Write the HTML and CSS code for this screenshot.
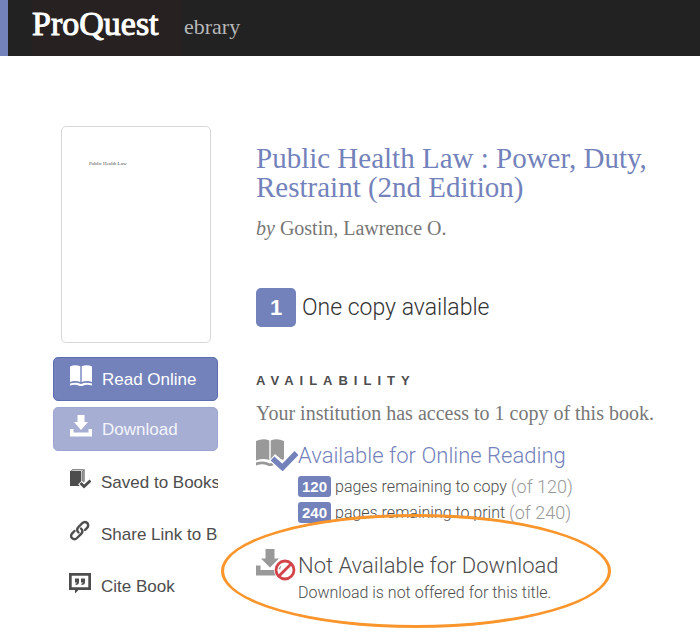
FILE: index.html
```html
<!DOCTYPE html>
<html lang="en">
<head>
    <meta charset="UTF-8">
    <meta name="viewport" content="width=device-width, initial-scale=1.0">
    <title>Public Health Law - ProQuest ebrary</title>
    <link rel="stylesheet" href="styles.css">
</head>
<body>

    <header class="header">
        <a class="logo" href="#">ProQuest</a>
        <a class="product" href="#">ebrary</a>
    </header>

    <main class="page">
        <!-- Cover and actions -->
        <aside class="sidebar">
            <div class="cover"><span class="cover-title">Public Health Law</span></div>
            <button class="btn" type="button">
                <svg width="22" height="22" viewBox="0 0 22 22" fill="#fff">
                    <path d="M0 1.5Q5-1 10.3 1.2V17Q5 15 0 17ZM11.7 1.2Q17-1 22 1.5V17Q17 15 11.7 17Z"/>
                    <path d="M0 18.5Q6 16.6 11 19Q16 16.600 22 18.5V20.600Q16.500 18.800 12.500 21H9.500Q5.500 18.800 0 20.600Z"/>
                </svg>
                <span>Read Online</span>
            </button>
            <button class="btn" type="button" disabled>
                <svg width="22" height="22" viewBox="0 0 22 22" fill="#fff">
                    <path d="M7.500 0h7v7H18l-7 8-7-8h3.500ZM0 14h3.500v3.500h15V14H22v7.500H0Z"/>
                </svg>
                <span>Download</span>
            </button>
            <ul class="actions">
                <li><a href="#">
                    <svg width="22" height="22" viewBox="0 0 22 22">
                        <path d="M1 3.500 4 1h11l-3 2.500V18H1Z" fill="#4d4d4d"/>
                        <path d="M2 3 4.500 1.500h10L13 3Z" fill="#ccc"/>
                        <path d="M13 4 15.200 1.500V13.500L13 15Z" fill="#aaa" stroke="#4d4d4d" stroke-width=".7"/>
                        <path d="m11 14.500 4 4.500 6.500-6.500" fill="none" stroke="#fff" stroke-width="5"/>
                        <path d="m11.500 15 3.500 3.500 6.500-6" fill="none" stroke="#4d4d4d" stroke-width="2.800"/>
                    </svg>
                    Saved to Bookshelf
                </a></li>
                <li><a href="#">
                    <svg width="22" height="22" viewBox="0 0 22 22" fill="none" stroke="#4d4d4d" stroke-width="2.400" stroke-linecap="round">
                        <path d="M9.500 12.500C7.500 10.500 8 8.500 9.500 7l3.800-3.800c1.500-1.500 3.500-1.500 4.900-.2s1.300 3.400-.1 4.800L16 10"/>
                        <path d="M12 8.500c2 2 1.500 4 .2 5.300l-4.200 4.200c-1.500 1.500-3.500 1.500-4.900.2s-1.300-3.400.1-4.800L5.500 11"/>
                    </svg>
                    Share Link to Book
                </a></li>
                <li><a href="#">
                    <svg width="22" height="22" viewBox="0 0 22 22" fill="#4d4d4d">
                        <path fill-rule="evenodd" d="M0 1h22v17H9.500L6 21.500V18H0ZM2.700 3.700v11.600h16.600V3.700Z"/>
                        <path d="M6 6.500h4V10q0 2.800-3.500 3v-1.500Q8 11.300 8 10.500H6ZM12 6.500h4V10q0 2.800-3.500 3v-1.500q1.500-.2 1.500-1h-2Z"/>
                    </svg>
                    Cite Book
                </a></li>
            </ul>
        </aside>

        <!-- Book details -->
        <section class="details">
            <h1>Public Health Law : Power, Duty, Restraint (2nd Edition)</h1>
            <p class="author"><em>by</em> Gostin, Lawrence O.</p>

            <p class="copies"><span class="copies-count">1</span>One copy available</p>

            <h2>Availability</h2>
            <p class="access">Your institution has access to 1 copy of this book.</p>

            <div class="option">
                <svg class="option-icon" width="42" height="32" viewBox="0 0 42 32">
                    <path d="M0 2Q7-1 13.300 1.500V21Q7 19 0 21.500ZM14.700 1.500Q21-1 28 2V21Q21 19 14.700 21Z" fill="#999"/>
                    <path d="M0 23.500Q8 21 14 24.500Q20 21 28 23.500V26Q20 24 15.500 27H12.500Q8 24 0 26.500Z" fill="#999"/>
                    <path d="m16 18.500 10.500 9 15.500-15" fill="none" stroke="#fff" stroke-width="9"/>
                    <path d="m16.500 19.500 10 9L40.500 14" fill="none" stroke="#7382bb" stroke-width="5.500"/>
                </svg>
                <div>
                    <h3><a href="#">Available for Online Reading</a></h3>
                    <p class="pages"><span class="count">120</span>pages remaining to copy <span class="total">(of 120)</span></p>
                    <p class="pages"><span class="count">240</span>pages remaining to print <span class="total">(of 240)</span></p>
                </div>
            </div>

            <div class="option option-download">
                <svg class="option-icon" width="42" height="32" viewBox="0 0 42 32">
                    <path d="M9.500 0h9v9.500H23l-9 9-9-9h4.500ZM0 16.500h4.500v4.500h18v-4.500H27v10H0Z" fill="#999"/>
                    <circle cx="29" cy="21" r="11" fill="#fff"/>
                    <path d="M22.500 20q1-3 3-3.500l-1.500 4Z" fill="#999"/>
                    <circle cx="29" cy="21" r="9" fill="none" stroke="#d2444a" stroke-width="2.800"/>
                    <path d="m23 27 12-12" stroke="#d2444a" stroke-width="2.800"/>
                </svg>
                <div>
                    <h3>Not Available for Download</h3>
                    <p class="note">Download is not offered for this title.</p>
                </div>
            </div>
        </section>
    </main>

</body>
</html>
```
FILE: styles.css
```css
*, *::after {
    box-sizing: border-box;
}

body {
    margin: 0;
    background-color: #fff;
    color: #4d4d4d;
    font-family: "Liberation Sans", Arial, sans-serif;
}

h1, h2, h3, p, ul {
    margin: 0;
    padding: 0;
    font-weight: normal;
}

a {
    color: inherit;
    text-decoration: none;
}

.header {
    display: flex;
    height: 56px;
    padding-left: 24px;
    border-left: 8px solid #7382bb;
    background-color: #222;
    font-family: "Liberation Serif", "Times New Roman", serif;
    line-height: 48px;
}

.logo {
    width: 150px;
    background-color: #272221;
    color: #fff;
    font-size: 34px;
    -webkit-text-stroke: 1px #fff;
}

.product {
    padding-left: 2px;
    color: #b8b8b8;
    font-size: 22px;
    line-height: 54px;
}

.page {
    display: flex;
    gap: 38px;
    padding: 70px 24px 32px 53px;
}

/* Left column */
.sidebar {
    flex: 0 0 165px;
    overflow: hidden;
}

.cover {
    width: 150px;
    height: 217px;
    margin: 0 0 14px 8px;
    padding: 34px 27px;
    border: 1px solid #d8d8d8;
    border-radius: 5px;
    font-family: "Liberation Serif", serif;
    font-size: 5px;
}

.cover-title {
    display: block;
}

.btn {
    display: flex;
    align-items: center;
    gap: 10px;
    width: 100%;
    height: 44px;
    margin-bottom: 6px;
    padding: 2px 16px 0;
    border: 1px solid #5c6db0;
    border-radius: 5px;
    background-color: #7382bb;
    color: #fff;
    font-family: inherit;
    font-size: 17px;
}

.btn svg {
    margin-bottom: 8px;
}

.btn:disabled {
    border-color: #9ca6d0;
    background-color: #a6aed4;
    color: #f4f5fa;
}

.actions {
    list-style: none;
}

.actions a {
    display: flex;
    align-items: center;
    gap: 10px;
    height: 52px;
    padding-left: 16px;
    font-size: 17px;
    white-space: nowrap;
}

.actions svg {
    flex: none;
    margin-bottom: 8px;
}

/* Right column */
.details {
    flex: 1;
    padding-top: 18px;
}

h1 {
    color: #7382bb;
    font-family: "Liberation Serif", Georgia, serif;
    font-size: 29px;
    line-height: 29px;
}

.author {
    margin-top: 14px;
    color: #777;
    font-family: "Liberation Serif", Georgia, serif;
    font-size: 20px;
    line-height: 24px;
}

.copies {
    display: flex;
    align-items: center;
    gap: 6px;
    margin-top: 48px;
    color: #333;
    font-family: Roboto, sans-serif;
    font-size: 23px;
    font-weight: 300;
}

.copies-count {
    width: 40px;
    border-radius: 5px;
    background-color: #7382bb;
    color: #fff;
    font-family: "Liberation Sans", Arial, sans-serif;
    font-size: 22px;
    font-weight: bold;
    line-height: 39px;
    text-align: center;
}

h2 {
    margin-top: 46px;
    font-size: 13px;
    font-weight: bold;
    letter-spacing: 6px;
    line-height: 16px;
    text-transform: uppercase;
}

.access {
    margin-top: 12px;
    color: #777;
    font-family: "Liberation Serif", Georgia, serif;
    font-size: 20px;
    line-height: 24px;
    white-space: nowrap;
}

.option {
    position: relative;
    display: flex;
    margin-top: 14px;
}

.option-icon {
    flex: none;
}

h3 {
    font-family: Roboto, sans-serif;
    font-size: 22px;
    font-weight: 300;
    line-height: 34px;
}

h3 a {
    color: #7382bb;
}

.pages {
    display: flex;
    align-items: center;
    height: 26px;
    font-family: Roboto, sans-serif;
    font-size: 16px;
    font-weight: 300;
    white-space: pre;
}

.count {
    width: 33px;
    margin-right: 4px;
    border-radius: 3px;
    background-color: #7382bb;
    color: #fff;
    font-family: "Liberation Sans", Arial, sans-serif;
    font-size: 15px;
    font-weight: bold;
    line-height: 21px;
    text-align: center;
}

.total {
    color: #999;
    font-size: 18px;
}

.option-download {
    margin-top: 24px;
}

/* Ring drawn round the download notice */
.option-download::after {
    content: "";
    position: absolute;
    top: -35px;
    left: -35px;
    width: 390px;
    height: 114px;
    border: 3px solid #f9952b;
    border-radius: 50%;
    pointer-events: none;
}

.note {
    font-family: Roboto, sans-serif;
    font-size: 16px;
    font-weight: 300;
    line-height: 20px;
}
```
